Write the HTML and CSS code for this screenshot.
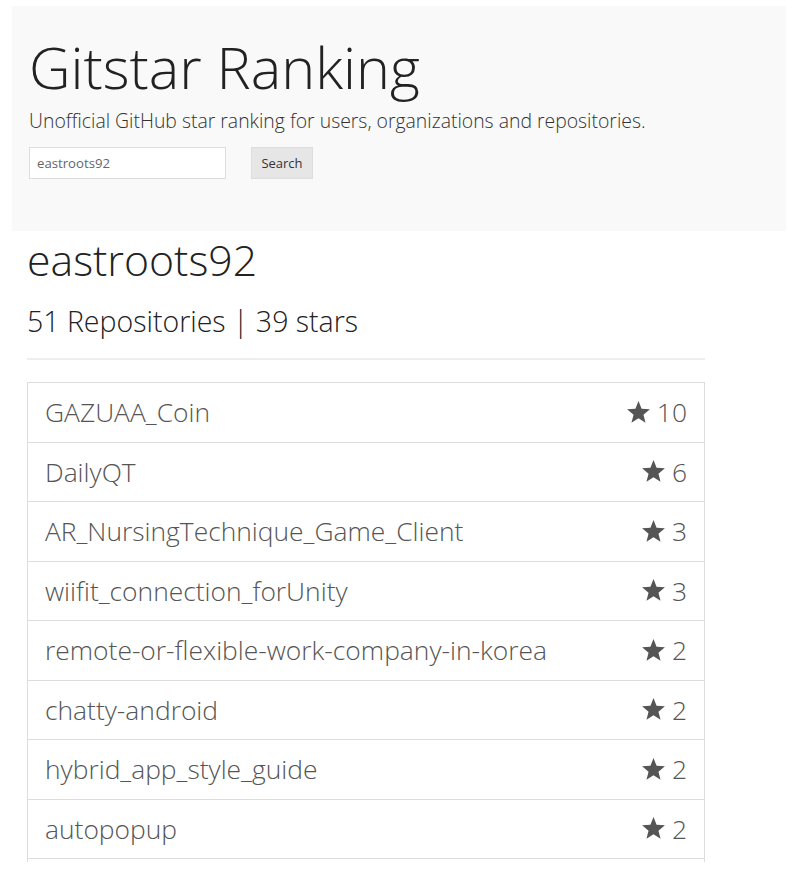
FILE: index.html
```html
<!DOCTYPE html>
<html>
<head>
<meta charset="utf-8">
<link rel="stylesheet" href="styles.css">
</head>
<body>
<div class="page">
  <header class="jumbo">
    <h1 class="title">Gitstar Ranking</h1>
    <p class="lead">Unofficial GitHub star ranking for users, organizations and repositories.</p>
    <form class="search">
      <input class="search-input" type="text" value="eastroots92">
      <button class="search-btn" type="button">Search</button>
    </form>
  </header>
  <main class="content">
    <h2 class="user">eastroots92</h2>
    <h3 class="summary">51 Repositories | 39 stars</h3>
    <hr class="rule">
    <ul class="repos">
      <li class="repo"><span class="name">GAZUAA_Coin</span><span class="stars"><svg class="star" viewBox="0 0 24 24"><path d="M12 1L14.94 8.45L22.94 8.95L16.76 14.05L18.76 21.8L12 17.5L5.24 21.8L7.24 14.05L1.06 8.95L9.06 8.45Z"/></svg>10</span></li>
      <li class="repo"><span class="name">DailyQT</span><span class="stars"><svg class="star" viewBox="0 0 24 24"><path d="M12 1L14.94 8.45L22.94 8.95L16.76 14.05L18.76 21.8L12 17.5L5.24 21.8L7.24 14.05L1.06 8.95L9.06 8.45Z"/></svg>6</span></li>
      <li class="repo"><span class="name">AR_NursingTechnique_Game_Client</span><span class="stars"><svg class="star" viewBox="0 0 24 24"><path d="M12 1L14.94 8.45L22.94 8.95L16.76 14.05L18.76 21.8L12 17.5L5.24 21.8L7.24 14.05L1.06 8.95L9.06 8.45Z"/></svg>3</span></li>
      <li class="repo"><span class="name">wiifit_connection_forUnity</span><span class="stars"><svg class="star" viewBox="0 0 24 24"><path d="M12 1L14.94 8.45L22.94 8.95L16.76 14.05L18.76 21.8L12 17.5L5.24 21.8L7.24 14.05L1.06 8.95L9.06 8.45Z"/></svg>3</span></li>
      <li class="repo"><span class="name">remote-or-flexible-work-company-in-korea</span><span class="stars"><svg class="star" viewBox="0 0 24 24"><path d="M12 1L14.94 8.45L22.94 8.95L16.76 14.05L18.76 21.8L12 17.5L5.24 21.8L7.24 14.05L1.06 8.95L9.06 8.45Z"/></svg>2</span></li>
      <li class="repo"><span class="name">chatty-android</span><span class="stars"><svg class="star" viewBox="0 0 24 24"><path d="M12 1L14.94 8.45L22.94 8.95L16.76 14.05L18.76 21.8L12 17.5L5.24 21.8L7.24 14.05L1.06 8.95L9.06 8.45Z"/></svg>2</span></li>
      <li class="repo"><span class="name">hybrid_app_style_guide</span><span class="stars"><svg class="star" viewBox="0 0 24 24"><path d="M12 1L14.94 8.45L22.94 8.95L16.76 14.05L18.76 21.8L12 17.5L5.24 21.8L7.24 14.05L1.06 8.95L9.06 8.45Z"/></svg>2</span></li>
      <li class="repo"><span class="name">autopopup</span><span class="stars"><svg class="star" viewBox="0 0 24 24"><path d="M12 1L14.94 8.45L22.94 8.95L16.76 14.05L18.76 21.8L12 17.5L5.24 21.8L7.24 14.05L1.06 8.95L9.06 8.45Z"/></svg>2</span></li>
    </ul>
  </main>
</div>
</body>
</html>
```
FILE: styles.css
```css
html, body {
  margin: 0;
  padding: 0;
  background: #fff;
  overflow: hidden;
}
body {
  font-family: "Open Sans", "Liberation Sans", sans-serif;
  color: #333;
  height: 884px;
}
.page {
  padding: 6px 8px 0 12px;
}
.jumbo {
  background: #f9f9f9;
  height: 225px;
  padding: 29px 0 0 17px;
  box-sizing: border-box;
}
.title {
  margin: 0;
  font-weight: 300;
  font-size: 57.5px;
  line-height: 64px;
  color: #222;
}
.lead {
  margin: 10px 0 0;
  font-size: 19.4px;
  line-height: 24px;
  font-weight: 300;
  color: #333;
}
.search {
  display: flex;
  gap: 25px;
  margin-top: 14px;
}
.search-input {
  width: 197px;
  height: 32px;
  box-sizing: border-box;
  border: 1px solid #ddd;
  padding: 0 7px;
  font-family: inherit;
  font-size: 13.2px;
  color: #666;
  background: #fff;
}
.search-btn {
  width: 62px;
  height: 32px;
  border: 1px solid #ddd;
  background: #e6e6e6;
  font-family: inherit;
  font-size: 13px;
  color: #333;
  padding: 0;
}
.content {
  padding: 0 81px 0 15px;
}
.user {
  margin: 4px 0 0;
  font-weight: 300;
  font-size: 42.75px;
  line-height: 50px;
  color: #222;
}
.summary {
  margin: 18px 0 0;
  font-weight: 300;
  font-size: 28.5px;
  line-height: 36px;
  color: #222;
}
.rule {
  margin: 19px 0 0;
  border: 0;
  border-top: 2px solid #eee;
}
.repos {
  list-style: none;
  margin: 22px 0 0;
  padding: 0 0 3px;
  border: 1px solid #ddd;
  border-bottom: 0;
}
.repo {
  display: flex;
  justify-content: space-between;
  align-items: center;
  height: 59.5px;
  box-sizing: border-box;
  padding: 0 17px;
  border-bottom: 1px solid #ddd;
  font-size: 26.4px;
  font-weight: 300;
  color: #555;
}
.stars {
  display: flex;
  align-items: center;
  gap: 6px;
}
.star {
  width: 25px;
  height: 25px;
  fill: #555;
}
```
